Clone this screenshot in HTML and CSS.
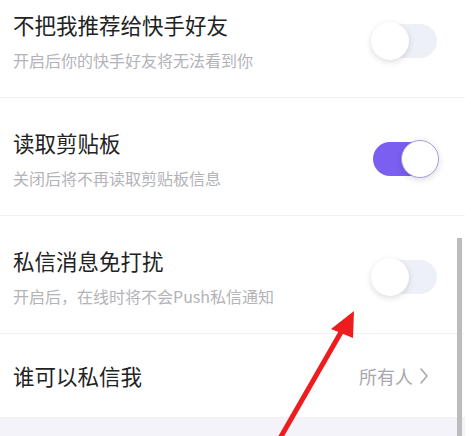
FILE: index.html
```html
<!DOCTYPE html>
<html lang="zh-CN">
<head>
    <meta charset="UTF-8">
    <meta name="viewport" content="width=device-width, initial-scale=1.0">
    <title>隐私设置</title>
    <link rel="stylesheet" href="styles.css">
</head>
<body>
    <div class="screen">
        <div class="settings-list">
            <div class="setting-row">
                <div class="setting-text">
                    <div class="setting-title">不把我推荐给快手好友</div>
                    <div class="setting-desc">开启后你的快手好友将无法看到你</div>
                </div>
                <div class="switch"><span class="knob"></span></div>
            </div>

            <div class="setting-row">
                <div class="setting-text">
                    <div class="setting-title">读取剪贴板</div>
                    <div class="setting-desc">关闭后将不再读取剪贴板信息</div>
                </div>
                <div class="switch on"><span class="knob"></span></div>
            </div>

            <div class="setting-row">
                <div class="setting-text">
                    <div class="setting-title">私信消息免打扰</div>
                    <div class="setting-desc">开启后，在线时将不会Push私信通知</div>
                </div>
                <div class="switch"><span class="knob"></span></div>
            </div>

            <div class="setting-row link-row">
                <div class="setting-title">谁可以私信我</div>
                <div class="link-value">
                    所有人
                    <svg class="chevron" width="10" height="18" viewBox="0 0 10 18">
                        <polyline points="2,2 8,9 2,16" fill="none" stroke="#a8a8ae" stroke-width="1.6" stroke-linejoin="round" stroke-linecap="round"/>
                    </svg>
                </div>
            </div>

            <div class="section-gap"></div>
        </div>

        <!-- scrollbar overlay -->
        <div class="scrollbar"></div>

        <!-- annotation arrow -->
        <svg class="arrow" width="471" height="436" viewBox="0 0 471 436">
            <line x1="279" y1="440" x2="344" y2="327" stroke="#ee1c1c" stroke-width="5" stroke-linecap="round"/>
            <polygon points="354,311 331,329 353,338" fill="#ee1c1c"/>
        </svg>
    </div>
</body>
</html>
```

FILE: styles.css
```css
body {
    margin: 0;
    background: #fff;
    font-family: "Noto Sans CJK SC", "Noto Sans", sans-serif;
    color: #222;
}
.screen {
    position: relative;
    width: 471px;
    height: 436px;
    overflow: hidden;
}
.settings-list {
    width: 465px;
    margin-top: -20px;
}
.setting-row {
    display: flex;
    align-items: center;
    justify-content: space-between;
    padding: 31px 28px 26px 13px;
    border-bottom: 1px solid #f0f0f3;
}
.setting-title {
    font-size: 21.5px;
    line-height: 28px;
    color: #222;
}
.setting-desc {
    margin-top: 10px;
    font-size: 16px;
    line-height: 22px;
    color: #b3b3b8;
}
.switch {
    position: relative;
    width: 64px;
    height: 34px;
    border-radius: 17px;
    background: #eef0f8;
}
.switch .knob {
    position: absolute;
    left: -2px;
    top: -2px;
    width: 38px;
    height: 38px;
    border-radius: 50%;
    background: #fff;
    box-shadow: 0 2px 6px rgba(0, 0, 0, 0.14);
}
.switch.on {
    background: #7b5ff1;
}
.switch.on .knob {
    left: auto;
    right: -2px;
    box-sizing: border-box;
    border: 1px solid #a99ae0;
}
.link-row {
    padding-top: 28px;
    padding-bottom: 27px;
}
.link-value {
    display: flex;
    align-items: center;
    gap: 6px;
    font-size: 18px;
    color: #a8a8ae;
    margin-right: 8px;
}
.section-gap {
    height: 40px;
    background: #f4f3fa;
}
.scrollbar {
    position: absolute;
    left: 457px;
    top: 238px;
    width: 5px;
    height: 200px;
    background: #bcbcbc;
}
.arrow {
    position: absolute;
    left: 0;
    top: 0;
}
```
